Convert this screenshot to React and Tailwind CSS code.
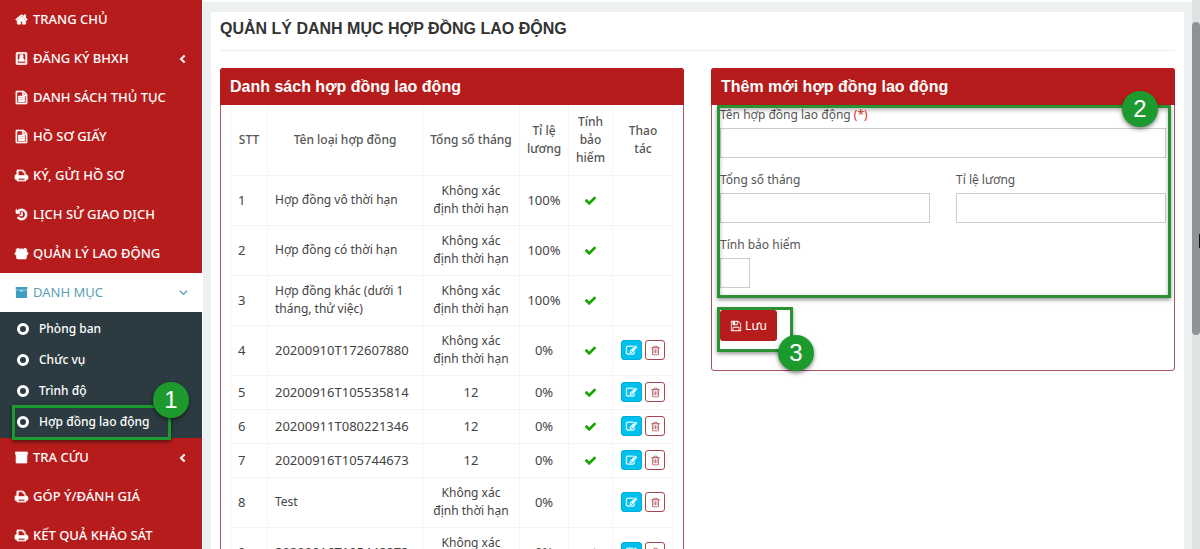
import { useState } from "react";

const icons = {
  home: "M1472 992v480q0 26-19 45t-45 19h-384v-384h-256v384h-384q-26 0-45-19t-19-45v-480q0-1 .5-3t.5-3l575-474 575 474q1 2 1 6zm223-69l-62 74q-8 9-21 11h-3q-13 0-21-7l-692-577-692 577q-12 8-24 7-13-2-21-11l-62-74q-8-10-7-23.5t11-21.5l719-599q32-26 76-26t76 26l244 204v-195q0-14 9-23t23-9h192q14 0 23 9t9 23v408l219 182q10 8 11 21.5t-7 23.5z",
  user: "M280 64h1232q130 0 130 130v1404q0 130-130 130H280q-130 0-130-130V194q0-130 130-130zm50 190v1284h1132V254zM895 350c150 0 240 110 240 260 0 110-50 200-100 250 190 50 275 150 275 430H480c0-280 85-380 275-430-50-50-100-140-100-250 0-150 90-260 240-260z",
  file: "M1596 380q28 28 48 76t20 88v1152q0 40-28 68t-68 28H224q-40 0-68-28t-28-68V96q0-40 28-68t68-28h896q40 0 88 20t76 48zm-444-244v376h376zm384 1528V640h-416q-40 0-68-28t-28-68V128H256v1536zM480 700h860v800H480zm170 170v110h520v-110zm0 240v110h520v-110z",
  print: "M448 1536h896v-256H448zm0-640h896V512h-160q-40 0-68-28t-28-68V256H448zm1344 64v416q0 13-9.500 22.500t-22.500 9.500h-224v160q0 40-28 68t-68 28H352q-40 0-68-28t-28-68v-160H32q-13 0-22.500-9.500T0 1376V960q0-79 56.500-135.500T192 768h64V224q0-40 28-68t68-28h672q40 0 88 20t76 48l152 152q28 28 48 76t20 88v256h64q79 0 135.500 56.500T1792 960z",
  history: "M1664 896q0 156-61 298t-164 245-245 164-298 61q-172 0-327-72.500T305 1387q-7-10-6.500-22.500t8.500-20.500l137-138q10-9 25-9 16 2 23 12 73 95 179 147t225 52q104 0 198.500-40.500T1258 1258t109.500-163.500T1408 896t-40.500-198.500T1258 534t-163.500-109.500T896 384q-98 0-188 35.500T548 521l137 138q31 30 14 69-17 40-59 40H192q-26 0-45-19t-19-45V256q0-42 40-59 39-17 69 14l130 129q107-101 244.500-156.500T896 128q156 0 298 61t245 164 164 245 61 298zM1024 608v448q0 14-9 23t-23 9H672q-14 0-23-9t-9-23v-64q0-14 9-23t23-9h224V608q0-14 9-23t23-9h64q14 0 23 9t9 23z",
  users: "M420 180c130 0 210 80 240 180 60-90 140-130 236-130s180 40 240 130c30-100 110-180 240-180 150 0 260 110 260 250 0 80-30 145-80 190 150 30 236 120 236 340q0 150-170 150h-80c40 80 60 180 60 300q0 240-240 240H430q-240 0-240-240c0-120 20-220 60-300h-80Q0 1110 0 960c0-220 86-310 236-340-50-45-80-110-80-190 0-140 114-250 264-250z",
  archive: "M100 128h1592v400H100zM130 570h1532v1094H130zm580 90v90h372v-90z",
  box: "M64 128h1664v340H64zM150 440h1492v1224H150z",
  check: "M1671 566q0 40-28 68l-724 724-136 136q-28 28-68 28t-68-28l-136-136-362-362q-28-28-28-68t28-68l136-136q28-28 68-28t68 28l294 295 656-657q28-28 68-28t68 28l136 136q28 28 28 68z",
  edit: "M888 1184l116-116-152-152-116 116v56h96v96h56zm440-720q-16-16-33 1l-350 350q-17 17-1 33t33-1l350-350q17-17 1-33zm80 594v190q0 119-84.500 203.500t-203.500 84.500h-832q-119 0-203.500-84.500t-84.500-203.500v-832q0-119 84.500-203.500t203.500-84.500h832q63 0 117 25 15 7 18 23 3 17-9 29l-49 49q-14 14-32 8-23-6-45-6h-832q-66 0-113 47t-47 113v832q0 66 47 113t113 47h832q66 0 113-47t47-113v-126q0-13 9-22l64-64q15-15 35-7t20 29zm-96-738l288 288-672 672h-288v-288zm444 132l-92 92-288-288 92-92q28-28 68-28t68 28l152 152q28 28 28 68t-28 68z",
  trash: "M704 736v576q0 14-9 23t-23 9h-64q-14 0-23-9t-9-23v-576q0-14 9-23t23-9h64q14 0 23 9t9 23zm256 0v576q0 14-9 23t-23 9h-64q-14 0-23-9t-9-23v-576q0-14 9-23t23-9h64q14 0 23 9t9 23zm256 0v576q0 14-9 23t-23 9h-64q-14 0-23-9t-9-23v-576q0-14 9-23t23-9h64q14 0 23 9t9 23zm128 724v-948h-896v948q0 22 7 40.500t14.500 27 10.500 8.500h832q3 0 10.500-8.500t14.500-27 7-40.500zm-672-1076h448l-48-117q-7-9-17-11h-317q-10 2-17 11zm928 32v64q0 14-9 23t-23 9h-96v948q0 83-47 143.500t-113 60.500h-832q-66 0-113-58.500t-47-141.500v-952h-96q-14 0-23-9t-9-23v-64q0-14 9-23t23-9h309l70-167q15-37 54-63t79-26h320q40 0 79 26t54 63l70 167h309q14 0 23 9t9 23z",
  save: "M512 1536h768v-384h-768v384zm896 0h128v-896q0-14-10-38.500t-20-34.500l-281-281q-10-10-34-20t-39-10v416q0 40-28 68t-68 28h-576q-40 0-68-28t-28-68v-416h-128v1280h128v-416q0-40 28-68t68-28h832q40 0 68 28t28 68v416zm-384-928v-320q0-13-9.500-22.500t-22.500-9.500h-192q-13 0-22.500 9.500t-9.500 22.500v320q0 13 9.500 22.500t22.500 9.500h192q13 0 22.500-9.500t9.500-22.500zm640 32v928q0 40-28 68t-68 28h-1344q-40 0-68-28t-28-68v-1344q0-40 28-68t68-28h928q40 0 88 20t76 48l280 280q28 28 48 76t20 88z",
  left: "M1203 544l-393 352 393 352-190 190-560-542 560-542z",
  down: "M1395 736l-50 50-449 449-449-449-50-50 90-90 409 409 409-409z",
};

const menuTop = [
  { icon: "home", label: "TRANG CHỦ" },
  { icon: "user", label: "ĐĂNG KÝ BHXH", arrow: true },
  { icon: "file", label: "DANH SÁCH THỦ TỤC" },
  { icon: "file", label: "HỒ SƠ GIẤY" },
  { icon: "print", label: "KÝ, GỬI HỒ SƠ" },
  { icon: "history", label: "LỊCH SỬ GIAO DỊCH" },
  { icon: "users", label: "QUẢN LÝ LAO ĐỘNG" },
];

const subMenu = ["Phòng ban", "Chức vụ", "Trình độ", "Hợp đồng lao động"];

const menuBottom = [
  { icon: "box", label: "TRA CỨU", arrow: true },
  { icon: "print", label: "GÓP Ý/ĐÁNH GIÁ" },
  { icon: "print", label: "KẾT QUẢ KHẢO SÁT" },
];

const UNLIMITED = "Không xác định thời hạn";

const contracts = [
  { name: "Hợp đồng vô thời hạn", months: UNLIMITED, rate: "100%", insured: true },
  { name: "Hợp đồng có thời hạn", months: UNLIMITED, rate: "100%", insured: true },
  { name: "Hợp đồng khác (dưới 1 tháng, thử việc)", months: UNLIMITED, rate: "100%", insured: true },
  { name: "20200910T172607880", months: UNLIMITED, rate: "0%", insured: true, editable: true },
  { name: "20200916T105535814", months: "12", rate: "0%", insured: true, editable: true },
  { name: "20200911T080221346", months: "12", rate: "0%", insured: true, editable: true },
  { name: "20200916T105744673", months: "12", rate: "0%", insured: true, editable: true },
  { name: "Test", months: UNLIMITED, rate: "0%", insured: false, editable: true },
  { name: "20200916T105448873", months: UNLIMITED, rate: "0%", insured: true, editable: true },
];

const textSize = (value) => (/^\d/.test(value) ? "text-[13px]" : "text-xs");

function Icon({ name, className }) {
  return (
    <svg
      viewBox="0 0 1792 1792"
      fill="currentColor"
      fillRule="evenodd"
      stroke="currentColor"
      className={`shrink-0 overflow-visible ${className}`}
      aria-hidden="true"
    >
      <path d={icons[name]} />
    </svg>
  );
}

function Badge({ children, className }) {
  return (
    <span
      className={`absolute z-10 flex size-9 items-center justify-center rounded-full bg-[#1d9a2e] font-['Liberation_Sans',sans-serif] text-2xl leading-none font-normal text-white shadow-[0_2px_4px_rgba(0,0,0,0.5)] ${className}`}
    >
      {children}
    </span>
  );
}

function MenuItem({ icon, label, arrow }) {
  return (
    <li>
      <a href="#" className="flex h-[39px] items-center pr-3 pl-[15px] text-white">
        <Icon name={icon} className="mr-[5px] size-[13px] stroke-[90]" />
        <span className="flex-1 whitespace-nowrap">{label}</span>
        {arrow && <Icon name="left" className="size-[14px]" />}
      </a>
    </li>
  );
}

function Sidebar() {
  return (
    <nav className="w-[202px] shrink-0 bg-[#b71c1c] text-[13px] font-medium">
      <ul>
        {menuTop.map((item) => (
          <MenuItem key={item.label} {...item} />
        ))}
        <li>
          <a href="#" className="flex h-[39px] items-center bg-white pr-3 pl-[15px] font-normal text-[#5a9fb5]">
            <Icon name="archive" className="mr-[5px] size-[13px] text-[#3c9dc0]" />
            <span className="flex-1">DANH MỤC</span>
            <Icon name="down" className="size-[13px] stroke-[90]" />
          </a>
          <ul className="bg-[#2c3b41] py-px text-xs">
            {subMenu.map((label, i) => (
              <li key={label} className="relative">
                <a href="#" className="flex h-[31px] items-center pl-[17px] text-white">
                  <span className="mr-[10px] size-3 rounded-full border-3 border-white" />
                  {label}
                </a>
                {i === subMenu.length - 1 && (
                  <>
                    <span className="pointer-events-none absolute -top-px left-3 h-[35px] w-[159px] border-3 border-[#1d9a2e] shadow-[0_2px_4px_rgba(0,0,0,0.5)]" />
                    <Badge className="-top-6 left-[153px]">1</Badge>
                  </>
                )}
              </li>
            ))}
          </ul>
        </li>
        {menuBottom.map((item) => (
          <MenuItem key={item.label} {...item} />
        ))}
      </ul>
    </nav>
  );
}

function Panel({ title, children }) {
  return (
    <section className="min-w-0 flex-1 rounded-[3px] border border-[#a85560]">
      <h2 className="-mx-px -mt-px flex h-[37px] items-center rounded-t-[3px] bg-[#b71c1c] px-[10px] font-['Liberation_Sans',sans-serif] text-[16px] font-bold text-white">
        {title}
      </h2>
      {children}
    </section>
  );
}

function ContractTable() {
  return (
    <div className="px-[9px]">
      <table className="w-full table-fixed border-collapse text-[13px] leading-[18px] text-[#444] [&_td]:border [&_td]:border-[#f4f4f4] [&_th]:border [&_th]:border-t-0 [&_th]:border-[#f4f4f4]">
        <colgroup>
          <col className="w-[37px]" />
          <col />
          <col className="w-[97px]" />
          <col className="w-[49px]" />
          <col className="w-[44px]" />
          <col className="w-[61px]" />
        </colgroup>
        <thead>
          <tr className="h-[70px] text-xs leading-[18px] text-[#555] [&_th]:font-medium">
            <th>STT</th>
            <th>Tên loại hợp đồng</th>
            <th className="whitespace-nowrap">Tổng số tháng</th>
            <th>Tỉ lệ lương</th>
            <th>Tính bảo hiểm</th>
            <th className="px-3">Thao tác</th>
          </tr>
        </thead>
        <tbody>
          {contracts.map((c, i) => (
            <tr key={c.name} className={c.months === UNLIMITED ? "h-[50px]" : "h-[34px]"}>
              <td className="pl-[7px]">{i + 1}</td>
              <td className={`px-[7px] leading-[18px] ${textSize(c.name)}`}>{c.name}</td>
              <td className={`px-2 text-center leading-[18px] ${textSize(c.months)}`}>{c.months}</td>
              <td className="text-center">{c.rate}</td>
              <td>{c.insured && <Icon name="check" className="mx-auto size-[13px] text-[#18a400]" />}</td>
              <td>
                {c.editable && (
                  <div className="flex justify-center gap-[3px]">
                    <button
                      type="button"
                      aria-label="Sửa"
                      className="flex h-5 w-[21px] items-center justify-center rounded-[3px] border border-[#00acd6] bg-[#00c0ef] text-white"
                    >
                      <Icon name="edit" className="size-[11px] stroke-[60]" />
                    </button>
                    <button
                      type="button"
                      aria-label="Xóa"
                      className="flex h-5 w-5 items-center justify-center rounded-[3px] border border-[#a94450] bg-white text-[#b0505c]"
                    >
                      <Icon name="trash" className="size-[11px]" />
                    </button>
                  </div>
                )}
              </td>
            </tr>
          ))}
        </tbody>
      </table>
    </div>
  );
}

function ContractForm() {
  const [insured, setInsured] = useState(false);
  const label = "block h-[23px] leading-5";
  const field = "block h-[30px] w-full border border-[#ccc] bg-white px-2 outline-none";

  return (
    <form className="px-2 pb-[29px] text-xs text-[#555]" onSubmit={(e) => e.preventDefault()}>
      <div className="relative grid grid-cols-2 gap-x-[26px] gap-y-3">
        <div className="col-span-2">
          <label htmlFor="name" className={label}>
            Tên hợp đồng lao động <span className="text-[#e02b20]">(*)</span>
          </label>
          <input id="name" type="text" className={field} />
        </div>
        <div>
          <label htmlFor="months" className={label}>Tổng số tháng</label>
          <input id="months" type="text" className={field} />
        </div>
        <div>
          <label htmlFor="rate" className={label}>Tỉ lệ lương</label>
          <input id="rate" type="text" className={field} />
        </div>
        <div className="col-span-2">
          <label htmlFor="insured" className={label}>Tính bảo hiểm</label>
          <input
            id="insured"
            type="checkbox"
            checked={insured}
            onChange={(e) => setInsured(e.target.checked)}
            className="block size-[30px] appearance-none border border-[#ccc] bg-white checked:bg-[#b71c1c]"
          />
        </div>
        <span className="pointer-events-none absolute top-0 -right-[5px] -bottom-[10px] -left-[3px] border-3 border-[#2a9134] shadow-[0_2px_4px_rgba(0,0,0,0.4),inset_0_2px_4px_rgba(0,0,0,0.3)]" />
        <Badge className="-top-[14px] right-2">2</Badge>
      </div>
      <div className="relative mt-[22px] w-fit">
        <button type="submit" className="flex h-[31px] w-[57px] items-center justify-center gap-[3px] rounded-[3px] bg-[#b71c1c] text-white">
          <Icon name="save" className="size-[12px]" />
          Lưu
        </button>
        <span className="pointer-events-none absolute -top-[3px] -left-[3px] h-[45px] w-[76px] border-3 border-[#2a9134] shadow-[0_2px_4px_rgba(0,0,0,0.4)]" />
        <Badge className="top-[25px] left-[58px]">3</Badge>
      </div>
    </form>
  );
}

export default function App() {
  return (
    <div className="flex h-screen overflow-hidden bg-[#ecf0f1] font-['Noto_Sans',sans-serif]">
      <Sidebar />
      <div className="flex min-w-0 flex-1 flex-col border-l border-white">
        <div className="h-0.5 shrink-0 bg-white" />
        <main className="mx-2 mt-[10px] flex-1 bg-white px-[9px]">
          <h1 className="flex h-[39px] items-center border-b border-[#eee] pb-1 font-['Liberation_Sans',sans-serif] text-[16px] font-bold text-[#333]">
            QUẢN LÝ DANH MỤC HỢP ĐỒNG LAO ĐỘNG
          </h1>
          <div className="mt-[17px] flex items-start gap-[27px]">
            <Panel title="Danh sách hợp đồng lao động">
              <ContractTable />
            </Panel>
            <Panel title="Thêm mới hợp đồng lao động">
              <ContractForm />
            </Panel>
          </div>
        </main>
      </div>
      <div className="relative w-2 shrink-0 bg-[#dfe1e2] pt-[22px]">
        <div className="h-[313px] rounded-sm bg-[#8f9395]" />
        <span className="absolute top-[234px] right-0 h-[14px] w-px bg-[#111]" />
      </div>
    </div>
  );
}
